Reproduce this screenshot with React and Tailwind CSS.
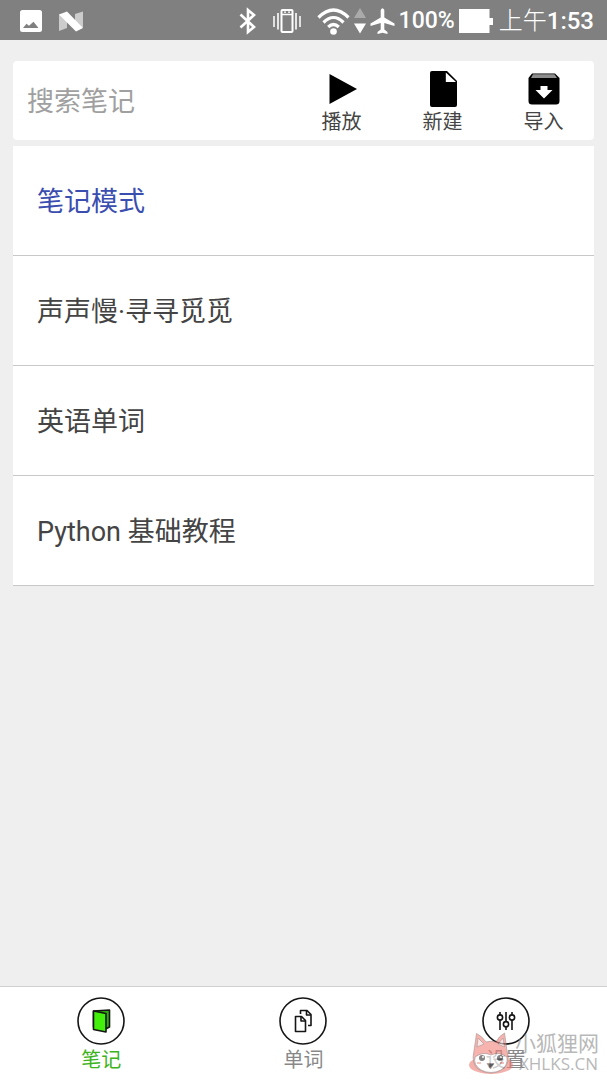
import React, { useState } from 'react';
import clsx from 'clsx';

const NOTES = ['笔记模式', '声声慢·寻寻觅觅', '英语单词', 'Python 基础教程'];

function PictureIcon() {
  return (
    <svg width="22" height="22" viewBox="0 0 22 22" aria-hidden="true">
      <rect width="22" height="22" rx="2.5" fill="#fff" />
      <path d="M3 18 L6.500 13.800 L9 15.800 L13.500 11.800 L18.500 18 Z" fill="#808080" />
    </svg>
  );
}

function NougatIcon() {
  return (
    <svg width="24" height="21" viewBox="0 0 24 21" aria-hidden="true">
      <path d="M0 3 L8 8 V17 L0 20 Z" fill="#ccc" />
      <path d="M16 3 L24 0.500 V17 L16 12 Z" fill="#ccc" />
      <path d="M0 3.500 L8 0.500 L24 17 L17 20.500 Z" fill="#fff" />
    </svg>
  );
}

function BluetoothIcon() {
  return (
    <svg width="18" height="28" viewBox="0 0 18 28" fill="none" stroke="#fff" strokeWidth="2.600" aria-hidden="true">
      <path d="M1.500 7.500 L15 20 L9 25 V3 L15 8 L1.500 20.500" />
    </svg>
  );
}

function VibrateIcon() {
  return (
    <svg width="28" height="24" viewBox="0 0 28 24" fill="none" stroke="#fff" aria-hidden="true">
      <path d="M1 7 V18 M27 7 V18" strokeWidth="1.500" />
      <path d="M5 4 V20.500 M23 4 V20.500" strokeWidth="1.600" />
      <rect x="8.500" y="1" width="11" height="22" rx="1" strokeWidth="2" />
      <path d="M8.500 5.500 H19.500" strokeWidth="1.500" />
      <path d="M11 3.200 H13 M15 3.200 H17" strokeWidth="1.200" />
    </svg>
  );
}

function WifiIcon() {
  return (
    <svg width="33" height="27" viewBox="0 0 33 27" fill="none" stroke="#fff" strokeWidth="3.200" aria-hidden="true">
      <path d="M1.500 9.500 Q16.500 -5.500 31.500 9.500" />
      <path d="M6.500 14.500 Q16.500 4.500 26.500 14.500" />
      <path d="M11.200 19 Q16.500 14 21.800 19" />
      <circle cx="16.500" cy="23.500" r="3.300" fill="#fff" stroke="none" />
    </svg>
  );
}

function DataIcon() {
  return (
    <svg width="12" height="26" viewBox="0 0 12 26" aria-hidden="true">
      <path d="M6 0 L12 10 H0 Z" fill="#aaa" />
      <path d="M0 15.500 H12 L6 25.500 Z" fill="#fff" />
    </svg>
  );
}

function PlaneIcon() {
  return (
    <svg width="25" height="26" viewBox="0 0 24 26" fill="#fff" aria-hidden="true">
      <path d="M10.200 2 Q12 -1.500 13.800 2 V9.500 L24 15.500 V18 L13.800 15 V21.500 L17 24 V26 L12 24.700 L7 26 V24 L10.200 21.500 V15 L0 18 V15.500 L10.200 9.500 Z" />
    </svg>
  );
}

function BatteryIcon() {
  return (
    <svg width="34" height="24" viewBox="0 0 34 24" fill="#fff" aria-hidden="true">
      <path d="M0 0 H30.500 V9 H34 V16 H30.500 V24 H0 Z" />
    </svg>
  );
}

function PlayIcon() {
  return (
    <svg width="36" height="36" viewBox="0 0 36 36" aria-hidden="true">
      <path d="M5.500 3 L33 18 L5.500 33 Z" />
    </svg>
  );
}

function NewFileIcon() {
  return (
    <svg width="36" height="36" viewBox="0 0 36 36" aria-hidden="true">
      <path d="M7 0 H22 L32 10 V34 Q32 36 30 36 H7 Q5 36 5 34 V2 Q5 0 7 0 Z" />
      <path d="M20.800 1.500 V11 H31 Z" fill="#fff" />
    </svg>
  );
}

function ImportIcon() {
  return (
    <svg width="36" height="36" viewBox="0 0 36 36" aria-hidden="true">
      <path d="M6 2.500 H29 L33.500 7 V30 Q33.500 33.500 30 33.500 H6 Q2.500 33.500 2.500 30 V7 Z" />
      <path d="M7 3.200 H28.500 L31 7 H5 Z" fill="#8c8c8c" />
      <path d="M14.500 15 H21.500 V19 H26.500 L18 27.500 L9.500 19 H14.500 Z" fill="#fff" />
    </svg>
  );
}

function BookIcon() {
  return (
    <svg width="48" height="48" viewBox="0 0 48 48" stroke="#151515" strokeWidth="1.600" strokeLinejoin="round" aria-hidden="true">
      <circle cx="24" cy="24" r="23" fill="#fff" />
      <path d="M16.500 14 L32.500 13 V30 L28.500 32 L16.500 30 Z" fill="#2fae10" />
      <path d="M16.500 14 L29 16.500 V35 L16.500 32.500 Z" fill="#43f00c" />
    </svg>
  );
}

function PagesIcon() {
  return (
    <svg width="48" height="48" viewBox="0 0 48 48" fill="none" stroke="#151515" strokeWidth="1.600" strokeLinejoin="round" aria-hidden="true">
      <circle cx="24" cy="24" r="23" />
      <path d="M16.500 19.500 H22.500 L26.500 23.500 V34.500 H16.500 Z" />
      <path d="M22 19.500 V24 H26.500" />
      <path d="M21.500 17 V13.500 H28 L32 17.500 V28.500 H29" />
      <path d="M27.500 13.500 V18 H32" />
    </svg>
  );
}

function SlidersIcon() {
  return (
    <svg width="48" height="48" viewBox="0 0 48 48" fill="none" stroke="#151515" strokeWidth="1.600" aria-hidden="true">
      <circle cx="24" cy="24" r="23" />
      <path d="M18 15 V18 M18 23 V33 M24 15 V24.500 M24 30 V33 M30 15 V18 M30 23 V33" />
      <circle cx="18" cy="20.500" r="2.600" />
      <circle cx="24" cy="27.200" r="2.600" />
      <circle cx="30" cy="20.500" r="2.600" />
    </svg>
  );
}

function FoxLogo() {
  return (
    <svg width="46" height="44" viewBox="0 0 46 44" stroke="#7a5a5a" strokeWidth="0.700" aria-hidden="true">
      <ellipse cx="22" cy="33" rx="22" ry="9" fill="#ee7d74" stroke="none" />
      <path d="M5 19 L7.500 1.500 Q13 4 17 10 Q22 8.500 27 10 Q30 4 35.500 1 L38 19 Q42 31 34 37 Q22 45 9 37 Q2 31 5 19 Z" fill="#f3827a" />
      <path d="M8 15 L9 6 L15 12 Z M29 12 L34 6 L35.500 15 Z" fill="#fbdad6" />
      <path d="M6 25 Q14 19 22 23 Q30 19 38 25 Q39 34 32 38 Q22 43 12 38 Q4 33 6 25 Z" fill="#fff" />
      <circle cx="13" cy="26" r="3" fill="#333" stroke="none" />
      <circle cx="31" cy="26" r="3" fill="#333" stroke="none" />
      <circle cx="14" cy="25" r="1" fill="#fff" stroke="none" />
      <circle cx="32" cy="25" r="1" fill="#fff" stroke="none" />
      <path d="M18 31.500 H25 L21.500 37 Z" fill="#333" />
      <path d="M8 31 H12 M31 31 H35" stroke="#ee7d74" strokeWidth="1.500" />
    </svg>
  );
}

const ACTIONS = [
  { label: '播放', Icon: PlayIcon },
  { label: '新建', Icon: NewFileIcon },
  { label: '导入', Icon: ImportIcon },
];

const TABS = [
  { label: '笔记', Icon: BookIcon },
  { label: '单词', Icon: PagesIcon },
  { label: '设置', Icon: SlidersIcon },
];

function StatusBar() {
  return (
    <header className="flex h-10 items-center justify-between bg-[#808080] pl-5 pr-[13px] pt-[2px] text-2xl text-white">
      <div className="flex items-center gap-[17px]">
        <PictureIcon />
        <NougatIcon />
      </div>
      <div className="flex items-center gap-1">
        <div className="flex items-center gap-4">
          <BluetoothIcon />
          <VibrateIcon />
          <WifiIcon />
        </div>
        <DataIcon />
        <PlaneIcon />
        <span className="text-[23px] font-medium">100%</span>
        <BatteryIcon />
        <span className="pl-[2px] font-medium">
          <span className="font-light">上午</span>1:53
        </span>
      </div>
    </header>
  );
}

export default function App() {
  const [query, setQuery] = useState('');
  const [tab, setTab] = useState('笔记');

  return (
    <div className="flex min-h-screen flex-col bg-[#efefef] font-[Roboto,'Noto_Sans_CJK_SC',sans-serif] text-[#444]">
      <StatusBar />

      <main className="flex-1 px-[13px] pt-[21px]">
        <div className="flex items-center rounded bg-white pb-[3px] pt-[10px]">
          <input
            type="text"
            aria-label="搜索笔记"
            placeholder="搜索笔记"
            value={query}
            onChange={(e) => setQuery(e.target.value)}
            className="min-w-0 flex-1 bg-transparent px-[14px] pb-1 text-[27px] outline-none placeholder:text-[#a0a0a0]"
          />
          <div className="flex">
            {ACTIONS.map(({ label, Icon }) => (
              <button key={label} type="button" className="flex w-[101px] flex-col items-center text-xl leading-[30px]">
                <Icon />
                {label}
              </button>
            ))}
          </div>
        </div>

        <ul className="mt-[6px]">
          {NOTES.filter((n) => n.includes(query)).map((note, i) => (
            <li key={note} className="border-b border-[#c8c8c8] bg-white">
              <a
                href="#"
                className={clsx('flex h-[109px] items-center px-6 pt-1 text-[27px]', i === 0 && 'text-[#3a4eb0]')}
              >
                {note}
              </a>
            </li>
          ))}
        </ul>
      </main>

      <nav className="relative flex border-t border-[#d0d0d0] bg-white pb-[5px] pt-[10px]">
        {TABS.map(({ label, Icon }) => (
          <button
            key={label}
            type="button"
            onClick={() => setTab(label)}
            className={clsx(
              'flex flex-1 flex-col items-center text-xl leading-[30px]',
              tab === label ? 'text-[#3db31c]' : 'text-[#888]'
            )}
          >
            <Icon />
            {label}
          </button>
        ))}

        {/* site mark over the corner of the tab bar */}
        <div className="pointer-events-none absolute bottom-1 right-2 flex items-end opacity-60">
          <FoxLogo />
          <div className="pb-1 text-[#8a8a8a]">
            <p className="text-[21px] leading-6">小狐狸网</p>
            <p className="pl-1 font-['Open_Sans',sans-serif] text-[17px] leading-4">XHLKS.CN</p>
          </div>
        </div>
      </nav>
    </div>
  );
}
